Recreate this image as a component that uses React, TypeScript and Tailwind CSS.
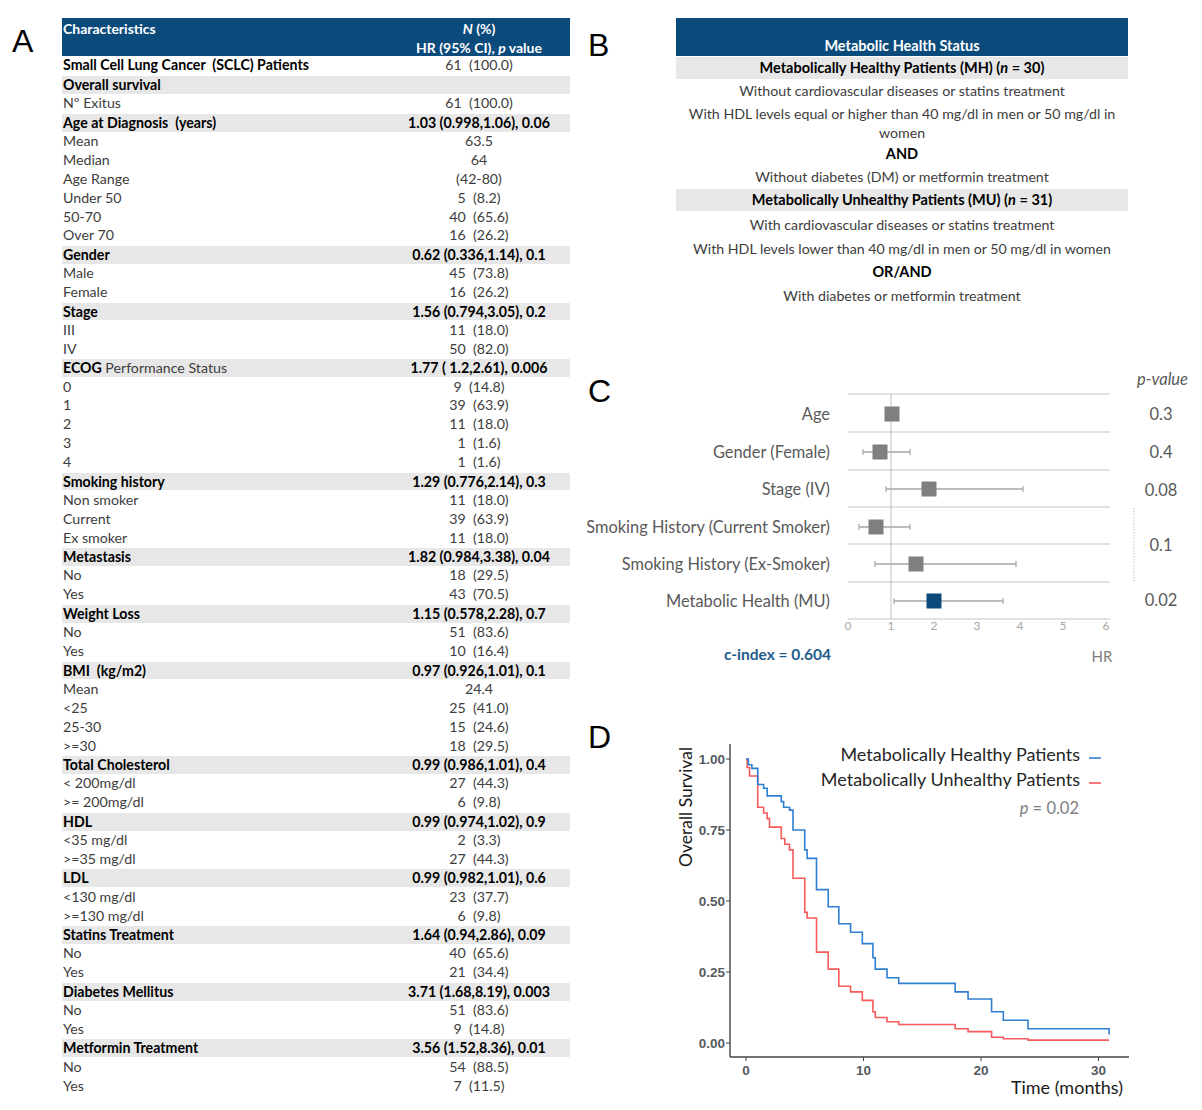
import React from "react";

type Row = [string, string, "h" | "b" | "n"];

const rows: Row[] = [
  ["Small Cell Lung Cancer  (SCLC) Patients", "61  (100.0)", "b"],
  ["Overall survival", "", "h"],
  ["Nº Exitus", "61  (100.0)", "n"],
  ["Age at Diagnosis  (years)", "1.03 (0.998,1.06), 0.06", "h"],
  ["Mean", "63.5", "n"],
  ["Median", "64", "n"],
  ["Age Range", "(42-80)", "n"],
  ["Under 50", "5  (8.2)", "n"],
  ["50-70", "40  (65.6)", "n"],
  ["Over 70", "16  (26.2)", "n"],
  ["Gender", "0.62 (0.336,1.14), 0.1", "h"],
  ["Male", "45  (73.8)", "n"],
  ["Female", "16  (26.2)", "n"],
  ["Stage", "1.56 (0.794,3.05), 0.2", "h"],
  ["III", "11  (18.0)", "n"],
  ["IV", "50  (82.0)", "n"],
  ["ECOG", "1.77 ( 1.2,2.61), 0.006", "h"],
  ["0", "9  (14.8)", "n"],
  ["1", "39  (63.9)", "n"],
  ["2", "11  (18.0)", "n"],
  ["3", "1  (1.6)", "n"],
  ["4", "1  (1.6)", "n"],
  ["Smoking history", "1.29 (0.776,2.14), 0.3", "h"],
  ["Non smoker", "11  (18.0)", "n"],
  ["Current", "39  (63.9)", "n"],
  ["Ex smoker", "11  (18.0)", "n"],
  ["Metastasis", "1.82 (0.984,3.38), 0.04", "h"],
  ["No", "18  (29.5)", "n"],
  ["Yes", "43  (70.5)", "n"],
  ["Weight Loss", "1.15 (0.578,2.28), 0.7", "h"],
  ["No", "51  (83.6)", "n"],
  ["Yes", "10  (16.4)", "n"],
  ["BMI  (kg/m2)", "0.97 (0.926,1.01), 0.1", "h"],
  ["Mean", "24.4", "n"],
  ["<25", "25  (41.0)", "n"],
  ["25-30", "15  (24.6)", "n"],
  [">=30", "18  (29.5)", "n"],
  ["Total Cholesterol", "0.99 (0.986,1.01), 0.4", "h"],
  ["< 200mg/dl", "27  (44.3)", "n"],
  [">= 200mg/dl", "6  (9.8)", "n"],
  ["HDL", "0.99 (0.974,1.02), 0.9", "h"],
  ["<35 mg/dl", "2  (3.3)", "n"],
  [">=35 mg/dl", "27  (44.3)", "n"],
  ["LDL", "0.99 (0.982,1.01), 0.6", "h"],
  ["<130 mg/dl", "23  (37.7)", "n"],
  [">=130 mg/dl", "6  (9.8)", "n"],
  ["Statins Treatment", "1.64 (0.94,2.86), 0.09", "h"],
  ["No", "40  (65.6)", "n"],
  ["Yes", "21  (34.4)", "n"],
  ["Diabetes Mellitus", "3.71 (1.68,8.19), 0.003", "h"],
  ["No", "51  (83.6)", "n"],
  ["Yes", "9  (14.8)", "n"],
  ["Metformin Treatment", "3.56 (1.52,8.36), 0.01", "h"],
  ["No", "54  (88.5)", "n"],
  ["Yes", "7  (11.5)", "n"],
];

const blue: [number, number][] = [
  [0, 1], [0.2, 0.98], [0.5, 0.967], [1.0, 0.91], [1.5, 0.897], [1.8, 0.87], [3.0, 0.85], [3.2, 0.83], [3.7, 0.82],
  [4.0, 0.75], [5.0, 0.68], [5.2, 0.65], [6.0, 0.54], [7.0, 0.48], [7.9, 0.42], [8.9, 0.39], [9.9, 0.35],
  [10.8, 0.3], [11.0, 0.26], [12.0, 0.23], [13.0, 0.21], [17.8, 0.18], [18.9, 0.155], [20.9, 0.11],
  [21.9, 0.08], [24.0, 0.05], [30.9, 0.03],
];
const red: [number, number][] = [
  [0, 1], [0.1, 0.97], [0.3, 0.94], [1.0, 0.83], [1.5, 0.81], [1.8, 0.79], [2.0, 0.76], [3.0, 0.72], [3.3, 0.7],
  [3.7, 0.68], [4.0, 0.58], [5.0, 0.46], [5.2, 0.44], [6.0, 0.32], [7.0, 0.26], [7.9, 0.2], [8.9, 0.18],
  [9.9, 0.15], [10.8, 0.11], [11.0, 0.09], [12.0, 0.075], [13.0, 0.065], [17.8, 0.05], [18.9, 0.04],
  [20.9, 0.02], [21.9, 0.015], [24.0, 0.01], [30.9, 0.01],
];

const tx = (t: number) => 76 + 11.75 * t;
const sy = (s: number) => 353 - 284 * s;

function stepPath(pts: [number, number][]) {
  let d = `M${tx(pts[0][0])},${sy(pts[0][1])}`;
  for (let i = 1; i < pts.length; i++) {
    d += ` H${tx(pts[i][0])} V${sy(pts[i][1])}`;
  }
  return d;
}

function TableA() {
  return (
    <div className="flex">
      <div className="w-[62px] pl-[12px] pt-[25px] font-['Liberation_Sans',sans-serif] text-[32px] leading-[32px] text-black">
        A
      </div>
      <div className="w-[508px] pt-[18px]">
        <div className="grid h-[38px] grid-cols-[326px_182px] bg-[#0b4b7c] text-[14px] font-bold leading-[19px] text-white">
          <div className="pl-[1px] pt-[1px]">Characteristics</div>
          <div className="pt-[1px] text-center">
            <div>
              <span className="italic">N</span> (%)
            </div>
            <div>
              HR (95% CI), <span className="italic">p</span> value
            </div>
          </div>
        </div>
        {rows.map(([label, value, kind], i) => (
          <div
            key={i}
            className={
              "grid h-[18.9px] grid-cols-[326px_182px] items-center text-[14.2px] leading-[18px] " +
              (kind === "h" ? "bg-[#e7e7e7] border-t border-white" : "")
            }
          >
            <div
              className={
                "whitespace-pre pl-[1px] " +
                (kind === "n" ? "text-[#3d3d3d]" : "font-bold text-black")
              }
            >
              {label === "ECOG" ? (
                <>
                  ECOG <span className="font-normal text-[#3d3d3d]">Performance Status</span>
                </>
              ) : (
                label
              )}
            </div>
            <div
              className={
                "whitespace-pre text-center " +
                (kind === "h" ? "font-bold text-black" : "text-[#3d3d3d]")
              }
            >
              {value}
            </div>
          </div>
        ))}
      </div>
    </div>
  );
}

function PanelB() {
  return (
    <div className="flex h-[345px]">
      <div className="w-[96px] pl-[8px] pt-[29px] font-['Liberation_Sans',sans-serif] text-[32px] leading-[32px] text-black">
        B
      </div>
      <div className="w-[452px] pt-[18px] text-center">
        <div className="flex h-[38px] items-end justify-center bg-[#0b4b7c] pb-[1px] text-[14.5px] font-bold leading-[18px] text-white">
          Metabolic Health Status
        </div>
        <div className="mt-[1px] flex h-[22px] items-center justify-center bg-[#e7e7e7] text-[14.5px] font-bold text-black">
          Metabolically Healthy Patients (MH) (<span className="italic">n</span>&nbsp;= 30)
        </div>
        <div className="flex h-[24px] items-center justify-center text-[14.2px] text-[#3d3d3d]">
          Without cardiovascular diseases or statins treatment
        </div>
        <div className="flex h-[39px] flex-col justify-center text-[14.2px] leading-[19px] text-[#3d3d3d]">
          <div>With HDL levels equal or higher than 40 mg/dl in men or 50 mg/dl in</div>
          <div>women</div>
        </div>
        <div className="flex h-[23px] items-center justify-center text-[14.5px] font-bold text-black">AND</div>
        <div className="flex h-[24px] items-center justify-center text-[14.2px] text-[#3d3d3d]">
          Without diabetes (DM) or metformin treatment
        </div>
        <div className="flex h-[22px] items-center justify-center bg-[#e7e7e7] text-[14.5px] font-bold text-black">
          Metabolically Unhealthy Patients (MU) (<span className="italic">n</span>&nbsp;= 31)
        </div>
        <div className="flex h-[27px] items-center justify-center text-[14.2px] text-[#3d3d3d]">
          With cardiovascular diseases or statins treatment
        </div>
        <div className="flex h-[21px] items-center justify-center text-[14.2px] text-[#3d3d3d]">
          With HDL levels lower than 40 mg/dl in men or 50 mg/dl in women
        </div>
        <div className="flex h-[25px] items-center justify-center text-[14.5px] font-bold text-black">OR/AND</div>
        <div className="flex h-[24px] items-center justify-center text-[14.2px] text-[#3d3d3d]">
          With diabetes or metformin treatment
        </div>
      </div>
    </div>
  );
}

const forest = [
  { label: "Age", cy: 22, x: 312, lo: 312, hi: 312, color: "#7f7f7f" },
  { label: "Gender (Female)", cy: 60, x: 300, lo: 283, hi: 330, color: "#7f7f7f" },
  { label: "Stage (IV)", cy: 97, x: 349, lo: 306, hi: 443, color: "#7f7f7f" },
  { label: "Smoking History (Current Smoker)", cy: 135, x: 296, lo: 279, hi: 330, color: "#7f7f7f" },
  { label: "Smoking History (Ex-Smoker)", cy: 172, x: 336, lo: 295, hi: 436, color: "#7f7f7f" },
  { label: "Metabolic Health (MU)", cy: 209, x: 354, lo: 314, hi: 423, color: "#0d4a7c" },
];

function PanelC() {
  return (
    <div className="flex h-[345px] flex-col">
      <div className="flex h-[47px] items-start justify-between">
        <div className="pl-[8px] pt-[30px] font-['Liberation_Sans',sans-serif] text-[32px] leading-[32px] text-black">
          C
        </div>
        <div className="pr-[14px] pt-[22px] text-[16.5px] italic text-[#595959]">p-value</div>
      </div>
      <svg width="622" height="298" viewBox="0 0 622 298">
        {[2, 40, 78, 115, 152, 190, 227].map((y) => (
          <line key={y} x1={268} x2={530} y1={y} y2={y} stroke="#d9d9d9" strokeWidth={1.5} />
        ))}
        <line x1={311} x2={311} y1={2} y2={227} stroke="#bfbfbf" strokeWidth={1} />
        {[0, 1, 2, 3, 4, 5, 6].map((k) => (
          <text key={k} x={268 + 43 * k} y={238} fontSize={12} fill="#a6a6a6" textAnchor="middle">
            {k}
          </text>
        ))}
        {forest.map((f) => (
          <g key={f.label}>
            <text x={250} y={f.cy + 5.5} fontSize={16.4} fill="#595959" textAnchor="end">
              {f.label}
            </text>
            {f.hi > f.lo && (
              <>
                <line x1={f.lo} x2={f.hi} y1={f.cy} y2={f.cy} stroke="#a6a6a6" strokeWidth={1.3} />
                <line x1={f.lo} x2={f.lo} y1={f.cy - 3} y2={f.cy + 3} stroke="#a6a6a6" strokeWidth={1.2} />
                <line x1={f.hi} x2={f.hi} y1={f.cy - 3} y2={f.cy + 3} stroke="#a6a6a6" strokeWidth={1.2} />
              </>
            )}
            <rect x={f.x - 7.5} y={f.cy - 7.5} width={15} height={15} fill={f.color} />
          </g>
        ))}
        {[
          ["0.3", 22],
          ["0.4", 60],
          ["0.08", 98],
          ["0.1", 153],
          ["0.02", 208],
        ].map(([t, y]) => (
          <text key={t as string} x={581} y={(y as number) + 6} fontSize={16.5} fill="#595959" textAnchor="middle">
            {t}
          </text>
        ))}
        <line x1={554} x2={554} y1={116} y2={191} stroke="#bfbfbf" strokeWidth={1} strokeDasharray="1.5 1.5" />
        <text x={251} y={268} fontSize={15.5} fontWeight={700} fill="#1f5c8c" textAnchor="end">
          c-index = 0.604
        </text>
        <text x={522} y={270} fontSize={15} fill="#7f7f7f" textAnchor="middle">
          HR
        </text>
      </svg>
    </div>
  );
}

function PanelD() {
  const yt: [string, number][] = [
    ["1.00", 1],
    ["0.75", 0.75],
    ["0.50", 0.5],
    ["0.25", 0.25],
    ["0.00", 0],
  ];
  return (
    <div className="flex h-[420px]">
      <div className="w-[90px] pl-[8px] pt-[31px] font-['Liberation_Sans',sans-serif] text-[32px] leading-[32px] text-black">
        D
      </div>
      <svg width="532" height="420" viewBox="0 0 532 420">
        <line x1={60} x2={60} y1={54} y2={367} stroke="#444" strokeWidth={1.4} />
        <line x1={60} x2={459} y1={367} y2={367} stroke="#444" strokeWidth={1.4} />
        {yt.map(([l, s]) => (
          <g key={l}>
            <line x1={56} x2={60} y1={sy(s)} y2={sy(s)} stroke="#444" strokeWidth={1} />
            <text
              x={55}
              y={sy(s) + 5}
              fontSize={13.5}
              fontWeight={700}
              fill="#555a60"
              textAnchor="end"
              fontFamily="'Liberation Sans', sans-serif"
            >
              {l}
            </text>
          </g>
        ))}
        {[0, 10, 20, 30].map((t) => (
          <g key={t}>
            <line x1={tx(t)} x2={tx(t)} y1={367} y2={371} stroke="#444" strokeWidth={1} />
            <text
              x={tx(t)}
              y={385}
              fontSize={13.5}
              fontWeight={700}
              fill="#555a60"
              textAnchor="middle"
              fontFamily="'Liberation Sans', sans-serif"
            >
              {t}
            </text>
          </g>
        ))}
        <path d={stepPath(red)} fill="none" stroke="#f75a5a" strokeWidth={1.6} />
        <path d={stepPath(blue)} fill="none" stroke="#2f7fd0" strokeWidth={1.6} />
        <text x={453} y={404} fontSize={18} fill="#1a1a1a" textAnchor="end">
          Time (months)
        </text>
        <text
          x={0}
          y={0}
          fontSize={17.5}
          fill="#1a1a1a"
          textAnchor="middle"
          transform="translate(22 117) rotate(-90)"
        >
          Overall Survival
        </text>
        <text x={410} y={71} fontSize={18} fill="#262626" textAnchor="end">
          Metabolically Healthy Patients
        </text>
        <line x1={419} x2={431} y1={68} y2={68} stroke="#2f7fd0" strokeWidth={1.6} />
        <text x={410} y={96} fontSize={18} fill="#262626" textAnchor="end">
          Metabolically Unhealthy Patients
        </text>
        <line x1={419} x2={431} y1={93} y2={93} stroke="#f75a5a" strokeWidth={1.6} />
        <text x={409} y={124} fontSize={16.5} fill="#808080" textAnchor="end">
          <tspan fontStyle="italic">p</tspan> = 0.02
        </text>
      </svg>
    </div>
  );
}

export default function App() {
  return (
    <div className="flex h-[1110px] w-[1202px] bg-white font-['Lato',sans-serif]">
      <div className="w-[580px]">
        <TableA />
      </div>
      <div className="w-[622px]">
        <PanelB />
        <PanelC />
        <PanelD />
      </div>
    </div>
  );
}
